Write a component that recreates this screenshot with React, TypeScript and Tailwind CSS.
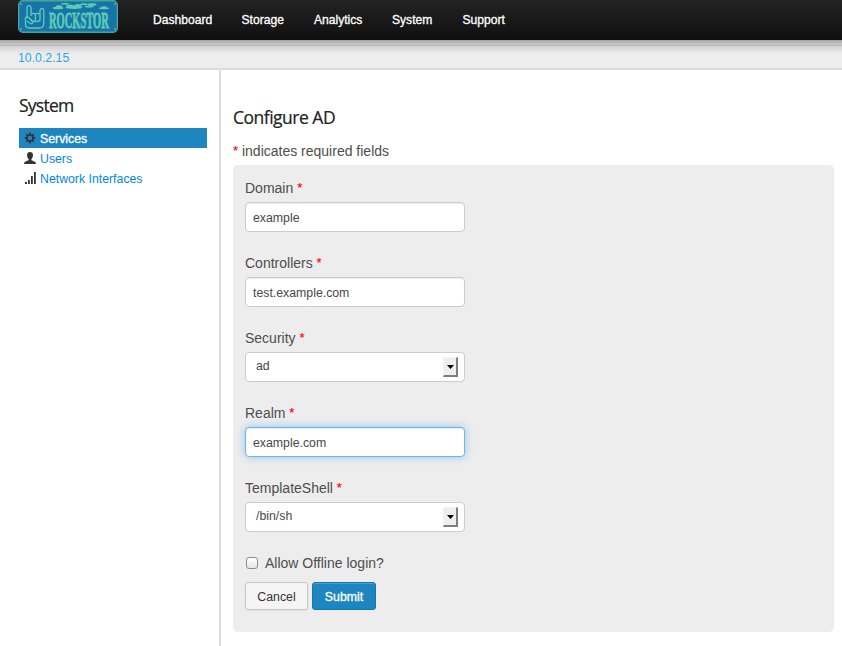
import React from "react";

const NAV = [
  { label: "Dashboard", cls: "w-[88.5px]" },
  { label: "Storage", cls: "w-[72.5px]" },
  { label: "Analytics", cls: "w-[78px]" },
  { label: "System", cls: "w-[70.5px]" },
  { label: "Support", cls: "" },
];

function Logo() {
  return (
    <svg width="100" height="33" viewBox="0 0 100 33" className="block" fill="none">
      <rect x="0.7" y="0.7" width="98.6" height="31.6" rx="4" fill="#1873a8" stroke="#44a796" strokeWidth="1.4" />
      <g fill="#52bfae">
        <circle cx="3" cy="4" r="0.9" />
        <circle cx="97" cy="4" r="0.9" />
        <circle cx="3" cy="29" r="0.9" />
        <circle cx="97" cy="29" r="0.9" />
      </g>
      <g stroke="#5ccdb5" strokeWidth="1.3" strokeLinejoin="round" strokeLinecap="round">
        <path d="M7.500 18 V25 Q8 28 11 28 H21 Q25.500 28 25.800 24 V10.500 Q25.600 8.500 24 8.500 Q22.200 8.500 22 10.500 V14" />
        <path d="M7.500 18 L9 16.500 L9 7.500 Q9.400 5.500 11.200 5.600 Q13 5.700 13.100 7.500 V15" />
        <path d="M13.100 15 Q15 12.300 17.300 14 Q19.800 12.400 22 14.500 V20 Q19.800 22.600 17.400 21 Q15 22.400 13.100 20" />
        <path d="M17.400 14 V21 M7.500 18 Q9 16 11.200 18 L15 22 Q14.600 24.200 12.500 23.500 L9.400 21.500" />
      </g>
      <g fill="#5ccdb5">
        <ellipse cx="40" cy="8" rx="5.5" ry="1.3" />
        <ellipse cx="41" cy="6.6" rx="3.2" ry="1.3" />
        <ellipse cx="56" cy="7.5" rx="8.5" ry="1.4" />
        <ellipse cx="52" cy="6" rx="3.8" ry="1.5" />
        <ellipse cx="60" cy="5.6" rx="3.8" ry="1.7" />
        <ellipse cx="47" cy="3.8" rx="4" ry="0.9" />
        <ellipse cx="66" cy="4.2" rx="3.5" ry="0.9" />
        <ellipse cx="74" cy="4.6" rx="4.500" ry="1.3" />
        <ellipse cx="71" cy="6.6" rx="4.500" ry="1" />
        <ellipse cx="86" cy="8.3" rx="5.2" ry="1" />
        <ellipse cx="86" cy="7.3" rx="2.8" ry="1" />
      </g>
      <text
        transform="translate(31 27.6) scale(0.466 1)"
        fontSize="22.5"
        fontWeight="700"
        fill="#5ccdb5"
        stroke="#5ccdb5"
        strokeWidth="0.8"
        className="font-['Liberation_Serif',serif]"
      >
        ROCKSTOR
      </text>
    </svg>
  );
}

function GearIcon() {
  return (
    <svg width="12" height="12" viewBox="0 0 12 12" className="block">
      <g stroke="#333" strokeWidth="2">
        <path d="M6 0.8V11.2M0.8 6H11.2M2.400 2.400L9.600 9.600M9.600 2.400L2.400 9.600" />
      </g>
      <circle cx="6" cy="6" r="3" fill="#1d86c1" stroke="#333" strokeWidth="1.6" />
    </svg>
  );
}

function UserIcon() {
  return (
    <svg width="12" height="12" viewBox="0 0 12 12" className="block" fill="#333">
      <path d="M6 0C4.200 0 3 1.100 3 3c0 1.600.6 3.200 1.600 4v.9C4.400 8.800.4 9 .2 10.900V12h11.600v-1.100C11.600 9 7.600 8.800 7.400 7.900V7C8.400 6.200 9 4.600 9 3 9 1.100 7.800 0 6 0z" />
    </svg>
  );
}

function SignalIcon() {
  return (
    <svg width="12" height="12" viewBox="0 0 12 12" className="block" fill="#333">
      <path d="M1 10h2v2H1zM4 8h1.800v4H4zM7 4h1.800v8H7zM10 0h1.800v12H10z" />
    </svg>
  );
}

const Star = () => (
  <span className="align-[1px] text-[13px] leading-none text-[#ff0010] [-webkit-text-stroke:0.15px_#ff0010]">*</span>
);

function Group({ label, children }: { label: string; children: React.ReactNode }) {
  return (
    <div className="mb-[25px] h-[50px]">
      <div className="mb-1 h-5 text-sm/5 whitespace-nowrap text-[#4d4d4d]">
        {label} <Star />
      </div>
      {children}
    </div>
  );
}

function Field({ value, focused }: { value: string; focused?: boolean }) {
  return (
    <div
      className={`flex h-[30px] w-[220px] items-center rounded-[4px] border bg-white px-[7px] pt-[2px] text-[12.3px]/[18px] text-[#484848] ${
        focused
          ? "border-[#6db5ea] shadow-[inset_0_1px_1px_rgba(0,0,0,0.075),0_0_8px_rgba(82,168,236,0.6)]"
          : "border-[#ccc] shadow-[inset_0_1px_1px_rgba(0,0,0,0.075)]"
      }`}
    >
      <span>{value}</span>
    </div>
  );
}

function Picker({ value }: { value: string }) {
  return (
    <div className="flex h-[30px] w-[220px] items-center justify-between rounded-[4px] border border-[#ccc] bg-white pr-[6px] pl-[10px] text-[12.3px] text-[#484848]">
      <span className="-mt-[2px]">{value}</span>
      <span className="flex h-5 w-[15px] items-center justify-center border-t border-r-2 border-b-2 border-l border-t-[#f4f4f4] border-r-[#7e7e7e] border-b-[#7e7e7e] border-l-[#f4f4f4] bg-[#eee]">
        <svg width="7" height="4" viewBox="0 0 7 4" className="block">
          <path d="M0 0h7L3.500 4z" fill="#000" />
        </svg>
      </span>
    </div>
  );
}

export default function App() {
  return (
    <div className="flex h-[646px] w-[842px] flex-col overflow-hidden bg-white font-['Liberation_Sans',Arial,sans-serif] text-[12.3px]">
      <header className="flex h-10 shrink-0 bg-linear-to-b from-[#232323] to-[#101010] pl-[18px]">
        <Logo />
        <nav className="flex h-10 items-center pl-[35px] text-[12.1px] text-white [-webkit-text-stroke:0.3px_white]">
          {NAV.map((n) => (
            <a key={n.label} className={n.cls}>
              {n.label}
            </a>
          ))}
        </nav>
      </header>
      <div className="flex h-[30px] shrink-0 flex-col border-b-2 border-[#ddd] bg-[#ededed]">
        <div className="h-[5px] bg-linear-to-b from-[#a6a6a6] to-[#cbcbcb]" />
        <div className="h-px bg-[#b8b8b8]" />
        <div className="h-[22px] bg-linear-to-b from-[#d2d2d2] to-[#ededed] to-[8px] pt-[2px] pl-[18px] leading-5 text-[#2fa4e7]">
          10.0.2.15
        </div>
      </div>
      <div className="flex flex-1">
        <aside className="w-[221px] border-r-2 border-[#ddd] pt-[25px] pl-[19px]">
          <h2 className="font-['Open_Sans',sans-serif] text-[17.500px]/[21px] tracking-[-0.75px] text-[#222] [-webkit-text-stroke:0.2px_#222]">
            System
          </h2>
          <ul className="mt-3 w-[188px] leading-5 text-[#0088dd]">
            <li className="flex h-5 items-center gap-[4px] bg-[#1d86c1] pl-[5px] text-white [-webkit-text-stroke:0.3px_white]">
              <GearIcon />
              <span className="pt-px">Services</span>
            </li>
            <li className="flex h-5 items-center gap-[4px] pl-[5px]">
              <UserIcon />
              <span className="pt-px">Users</span>
            </li>
            <li className="flex h-5 items-center gap-[4px] pl-[5px]">
              <SignalIcon />
              <span className="pt-px">Network Interfaces</span>
            </li>
          </ul>
        </aside>
        <main className="w-[621px] pt-[35px] pr-2 pl-3">
          <h1 className="font-['Open_Sans',sans-serif] text-[17.500px]/[24px] tracking-[-0.5px] text-[#222] [-webkit-text-stroke:0.2px_#222]">
            Configure AD
          </h1>
          <p className="mt-[12px] h-5 text-sm/5 text-[#4d4d4d]">
            <Star /> indicates required fields
          </p>
          <form className="mt-1 h-[467px] rounded-[5px] bg-[#ededed] pt-[13px] pl-3">
            <Group label="Domain">
              <Field value="example" />
            </Group>
            <Group label="Controllers">
              <Field value="test.example.com" />
            </Group>
            <Group label="Security">
              <Picker value="ad" />
            </Group>
            <Group label="Realm">
              <Field value="example.com" focused />
            </Group>
            <Group label="TemplateShell">
              <Picker value="/bin/sh" />
            </Group>
            <div className="flex h-5 items-center text-sm/5 text-[#4d4d4d]">
              <span className="mr-[7px] ml-px h-3 w-3 rounded-[3px] border border-[#8c8c8c] bg-linear-to-b from-white to-[#e6e6e6]" />
              <span>Allow Offline login?</span>
            </div>
            <div className="mt-[9px] flex gap-1">
              <button
                type="button"
                className="h-7 w-[63px] rounded-[3px] border border-[#c6c6c6] bg-[#f5f5f5] pt-[2px] leading-[18px] text-[#333] shadow-[0_1px_2px_rgba(0,0,0,0.05)]"
              >
                Cancel
              </button>
              <button
                type="button"
                className="h-7 w-[64px] rounded-[3px] border border-[#1277ae] bg-[#1d86c1] pt-[2px] leading-[18px] text-white shadow-[inset_0_1px_0_rgba(255,255,255,0.2)] [-webkit-text-stroke:0.3px_white]"
              >
                Submit
              </button>
            </div>
          </form>
        </main>
      </div>
    </div>
  );
}
